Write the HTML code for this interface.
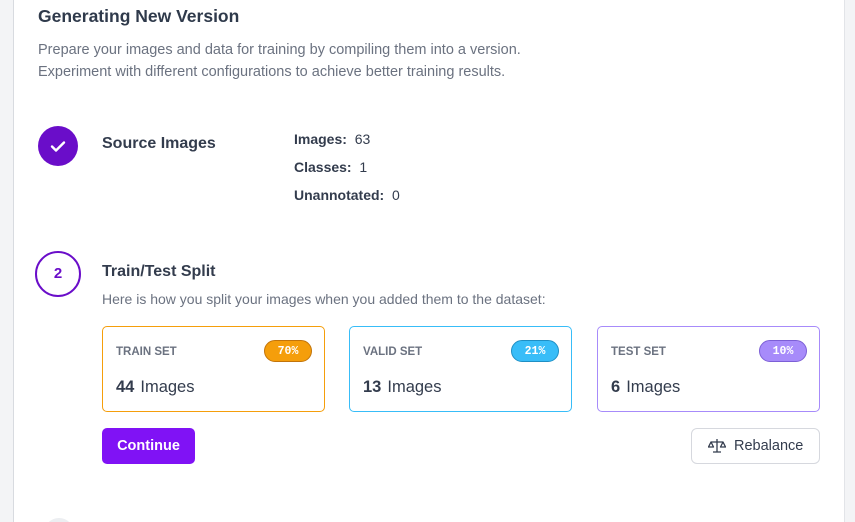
<!DOCTYPE html>
<html style="height:522px;overflow:hidden"><head><style>
body{margin:0;width:855px;height:522px;background:#f3f4f6;font-family:"Liberation Sans",sans-serif;overflow:hidden;position:relative;color:#333c4d}
.panel{position:absolute;left:13px;top:-10px;width:830px;height:532px;background:#fff;border-left:1px solid #d8dbe0;border-right:1px solid #e2e4e8}
.a{position:absolute;white-space:nowrap}
h1{position:absolute;left:38px;top:6px;margin:0;font-size:17.5px;font-weight:bold;color:#2f3a4b}
.p{font-size:14.5px;color:#6b7280}
.circ{position:absolute;width:40px;height:40px;border-radius:50%;box-sizing:border-box}
.card{position:absolute;top:326px;width:223px;height:86px;box-sizing:border-box;border-radius:5px;background:#fff}
.lbl{position:absolute;left:13px;top:19px;font-size:11.5px;font-weight:bold;color:#6b7280}
.pill{position:absolute;top:13px;width:48px;height:22px;border-radius:11px;box-sizing:border-box;color:#fff;font-family:"Liberation Mono",monospace;font-weight:bold;font-size:11.5px;text-align:center;line-height:22px}
.num{position:absolute;left:13px;top:51px;font-size:16.5px;color:#333c4d}
.num b{margin-right:6px}
</style></head><body>
<div class="panel"></div>
<h1>Generating New Version</h1>
<div class="a p" style="left:38px;top:42px">Prepare your images and data for training by compiling them into a version.</div>
<div class="a p" style="left:38px;top:64px">Experiment with different configurations to achieve better training results.</div>

<div class="circ" style="left:38px;top:126px;background:#6a0dc9"><svg width="40" height="40"><path d="M14 20.5l4 4 8-8" stroke="#fff" stroke-width="2.4" fill="none" stroke-linecap="round" stroke-linejoin="round"/></svg></div>
<div class="a" style="left:102px;top:135px;font-size:16px;font-weight:bold">Source Images</div>
<div class="a" style="left:294px;top:131px;font-size:14px"><b>Images:</b>&nbsp; 63</div>
<div class="a" style="left:294px;top:159px;font-size:14px"><b>Classes:</b>&nbsp; 1</div>
<div class="a" style="left:294px;top:187px;font-size:14px"><b>Unannotated:</b>&nbsp; 0</div>

<div class="circ" style="left:35px;top:251px;width:46px;height:46px;border:2px solid #6a0dc9;color:#6a0dc9;font-weight:bold;font-size:15px;text-align:center;line-height:42px">2</div>
<div class="a" style="left:102px;top:263px;font-size:16px;font-weight:bold">Train/Test Split</div>
<div class="a p" style="left:102px;top:291px;font-size:14px">Here is how you split your images when you added them to the dataset:</div>

<div class="card" style="left:102px;border:1px solid #f59e0b"><div class="lbl">TRAIN SET</div><div class="pill" style="left:161px;background:#f59e0b;border:1px solid #c2740a">70%</div><div class="num"><b>44</b>Images</div></div>
<div class="card" style="left:349px;border:1px solid #38bdf8"><div class="lbl">VALID SET</div><div class="pill" style="left:161px;background:#38bdf8;border:1px solid #1f8fc4">21%</div><div class="num"><b>13</b>Images</div></div>
<div class="card" style="left:597px;border:1px solid #a78bfa"><div class="lbl">TEST SET</div><div class="pill" style="left:161px;background:#a78bfa;border:1px solid #7c5fd6">10%</div><div class="num"><b>6</b>Images</div></div>

<div class="a" style="left:102px;top:428px;width:93px;height:36px;background:#8012f5;border-radius:5px;color:#fff;font-weight:bold;font-size:14.5px;text-align:center;line-height:36px">Continue</div>
<div class="a" style="left:691px;top:428px;width:129px;height:36px;border:1px solid #d6d8de;border-radius:6px;box-sizing:border-box;font-size:14.5px;line-height:34px;color:#333c4d">
<svg style="position:absolute;left:16px;top:9px" width="18" height="16" viewBox="0 0 18 16" fill="none" stroke="#333c4d" stroke-width="1.3" stroke-linejoin="round"><path d="M9 1v13M5 14h8M3 4h12M3 4l-2.5 5h5zM15 4l-2.5 5h5z"/></svg>
<span style="position:absolute;left:42px">Rebalance</span></div>
<div class="circ" style="left:44px;top:518px;width:30px;height:30px;background:#eceef1"></div>
</body></html>
